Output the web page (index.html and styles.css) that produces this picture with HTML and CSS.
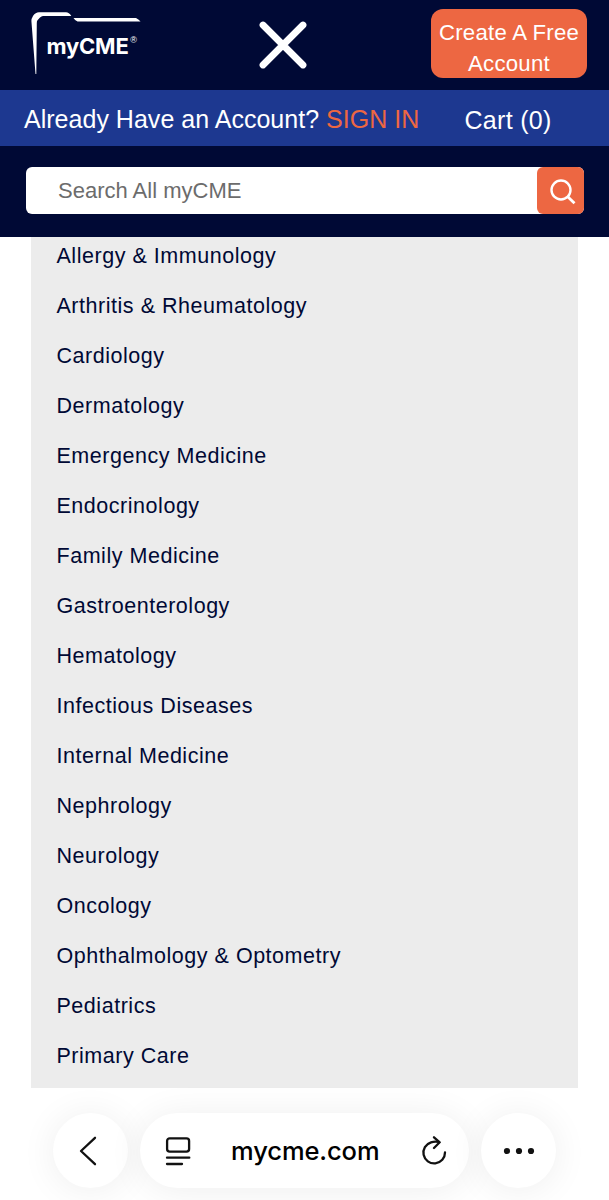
FILE: index.html
```html
<!DOCTYPE html>
<html lang="en">
<head>
    <meta charset="UTF-8">
    <meta name="viewport" content="width=device-width, initial-scale=1.0">
    <title>myCME</title>
    <link rel="stylesheet" href="styles.css">
</head>
<body>
    <header class="header">
        <div class="top-row">
            <a href="#" class="logo">
                <svg width="110" height="64" viewBox="0 0 110 64">
                    <path d="M4.500 62 L0.400 9 Q0.400 6.500 2 4 Q4.500 0.300 8 0.300 L35 0.300 Q38 0.300 40.300 4 L12 4 Q10.500 4 9 5.500 L6.500 8.200 Q5.800 9 5.800 11 L5.300 62 Z" fill="#fff"/>
                    <path d="M42.500 6 L105 6 Q107.500 7 109.500 9.500 L46.500 9.500 Q44 8.500 42.500 6 Z" fill="#fff"/>
                    <text class="logo-text" x="15.500" y="41.500">myCME</text>
                    <text class="logo-mark" x="99.300" y="31">®</text>
                </svg>
            </a>
            <button class="menu-close" aria-label="Close menu">
                <svg width="48" height="48" viewBox="0 0 48 48">
                    <path d="M4 4 L44 44 M44 4 L4 44" fill="none" stroke="#fff" stroke-width="6.800" stroke-linecap="round"/>
                </svg>
            </button>
            <a href="#" class="btn-create">Create A Free<br>Account</a>
        </div>

        <div class="account-bar">
            <p class="account-text">Already Have an Account? <a href="#">SIGN IN</a></p>
            <a href="#" class="cart">Cart (0)</a>
        </div>

        <form class="search-form">
            <input type="text" class="search-input" placeholder="Search All myCME">
            <button type="button" class="search-btn" aria-label="Search">
                <svg width="26" height="26" viewBox="0 0 26 26">
                    <circle cx="11" cy="11" r="9.500" fill="none" stroke="#fff" stroke-width="2.400"/>
                    <path d="M17.800 17.800 L24.500 24.300" stroke="#fff" stroke-width="2.800"/>
                </svg>
            </button>
        </form>
    </header>

    <!-- Specialties -->
    <ul class="specialties">
        <li><a href="#">Allergy &amp; Immunology</a></li>
        <li><a href="#">Arthritis &amp; Rheumatology</a></li>
        <li><a href="#">Cardiology</a></li>
        <li><a href="#">Dermatology</a></li>
        <li><a href="#">Emergency Medicine</a></li>
        <li><a href="#">Endocrinology</a></li>
        <li><a href="#">Family Medicine</a></li>
        <li><a href="#">Gastroenterology</a></li>
        <li><a href="#">Hematology</a></li>
        <li><a href="#">Infectious Diseases</a></li>
        <li><a href="#">Internal Medicine</a></li>
        <li><a href="#">Nephrology</a></li>
        <li><a href="#">Neurology</a></li>
        <li><a href="#">Oncology</a></li>
        <li><a href="#">Ophthalmology &amp; Optometry</a></li>
        <li><a href="#">Pediatrics</a></li>
        <li><a href="#">Primary Care</a></li>
    </ul>

    <!-- Browser toolbar -->
    <nav class="toolbar">
        <button class="tool-btn tool-back" aria-label="Back">
            <svg width="18" height="30" viewBox="0 0 18 30">
                <path d="M16 1.800 L2 15 L16 28.200" fill="none" stroke="#111" stroke-width="2.300" stroke-linecap="round" stroke-linejoin="round"/>
            </svg>
        </button>
        <div class="address">
            <svg width="26" height="30" viewBox="0 0 26 30">
                <g fill="none" stroke="#111" stroke-width="2.300" stroke-linecap="round">
                    <rect x="2.100" y="2.300" width="22" height="13.400" rx="2.600"/>
                    <path d="M2 21.700 H24.300 M2 28 H17"/>
                </g>
            </svg>
            <span class="address-text">mycme.com</span>
            <svg width="26" height="30" viewBox="0 0 26 30">
                <g fill="none" stroke="#111" stroke-width="2.300" stroke-linecap="round" stroke-linejoin="round">
                    <path d="M18 6 C15.800 5.500 12.500 5.500 10 6.300 A10.800 10.800 0 1 0 24 16.500"/>
                    <path d="M13 1.300 L18.700 6.300 L13 12"/>
                </g>
            </svg>
        </div>
        <button class="tool-btn" aria-label="More">
            <svg width="32" height="8" viewBox="0 0 32 8">
                <g fill="#111">
                    <circle cx="4" cy="4" r="3.100"/>
                    <circle cx="16" cy="4" r="3.100"/>
                    <circle cx="28" cy="4" r="3.100"/>
                </g>
            </svg>
        </button>
    </nav>
</body>
</html>
```
FILE: styles.css
```css
:root {
    --navy: #000935;
    --blue: #1d3890;
    --orange: #ed6742;
    --gray: #ececec;
    --white: #ffffff;
}

* {
    margin: 0;
    padding: 0;
    box-sizing: border-box;
}

body {
    background-color: var(--white);
    color: var(--navy);
    font-family: "Liberation Sans", Arial, Helvetica, sans-serif;
    height: 1200px;
    overflow: hidden;
}

a {
    color: inherit;
    text-decoration: none;
}

button {
    border: none;
    background: none;
    cursor: pointer;
}

svg {
    display: block;
}

.header {
    background-color: var(--navy);
    height: 236.5px;
}

.top-row {
    display: flex;
    align-items: flex-start;
    justify-content: space-between;
    height: 90px;
    padding: 9px 22px 0 31px;
}

.logo {
    width: 110px;
    padding-top: 3px;
}

.logo-text {
    font-family: Inter, "Liberation Sans", sans-serif;
    font-size: 22px;
    font-weight: 700;
    letter-spacing: -0.2px;
    fill: var(--white);
}

.logo-mark {
    font-size: 9px;
    fill: var(--white);
}

.menu-close {
    padding: 12px 7px 0 0;
}

.btn-create {
    width: 156px;
    height: 69px;
    padding-top: 8px;
    border-radius: 12px;
    background-color: var(--orange);
    color: var(--white);
    font-size: 22.2px;
    line-height: 31px;
    letter-spacing: 0.25px;
    text-align: center;
    white-space: nowrap;
}

.account-bar {
    display: flex;
    align-items: center;
    height: 56px;
    padding: 2px 0 0 24px;
    background-color: var(--blue);
    color: var(--white);
    font-size: 25px;
}

.account-text {
    width: 440.5px;
    letter-spacing: 0.02px;
    white-space: nowrap;
}

.account-text a {
    color: var(--orange);
}

.cart {
    padding-top: 2px;
    letter-spacing: 0.3px;
}

.search-form {
    display: flex;
    margin: 21px 25px 0 26px;
    height: 47px;
    border-radius: 6px;
    background-color: var(--white);
}

.search-input {
    flex: 1;
    min-width: 0;
    padding: 1px 0 0 32px;
    border: none;
    outline: none;
    background: none;
    font-family: inherit;
    font-size: 22px;
}

.search-input::placeholder {
    color: #6c6c6c;
}

.search-btn {
    display: flex;
    align-items: center;
    justify-content: center;
    width: 47px;
    padding: 3px 0 0 5px;
    border-radius: 6px;
    background-color: var(--orange);
}

.specialties {
    height: 851.5px;
    margin: 0 31px;
    padding-left: 25.5px;
    background-color: var(--gray);
    list-style: none;
    font-size: 21.5px;
    letter-spacing: 0.53px;
}

.specialties li {
    height: 50px;
    line-height: 39px;
}

.toolbar {
    display: flex;
    justify-content: center;
    gap: 12px;
    padding-top: 25px;
}

.tool-btn,
.address {
    display: flex;
    align-items: center;
    height: 75px;
    border-radius: 38px;
    background-color: var(--white);
    box-shadow: 0 2px 36px rgba(0, 0, 0, 0.07);
}

.tool-btn {
    justify-content: center;
    width: 75px;
}

.tool-back {
    padding-right: 5px;
}

.address {
    justify-content: space-between;
    width: 329px;
    padding: 0 22px 0 24.5px;
}

.address-text {
    padding-right: 1px;
    color: #000;
    font-family: Inter, "Liberation Sans", sans-serif;
    font-size: 25.5px;
    font-weight: 500;
    letter-spacing: -0.1px;
}
```
